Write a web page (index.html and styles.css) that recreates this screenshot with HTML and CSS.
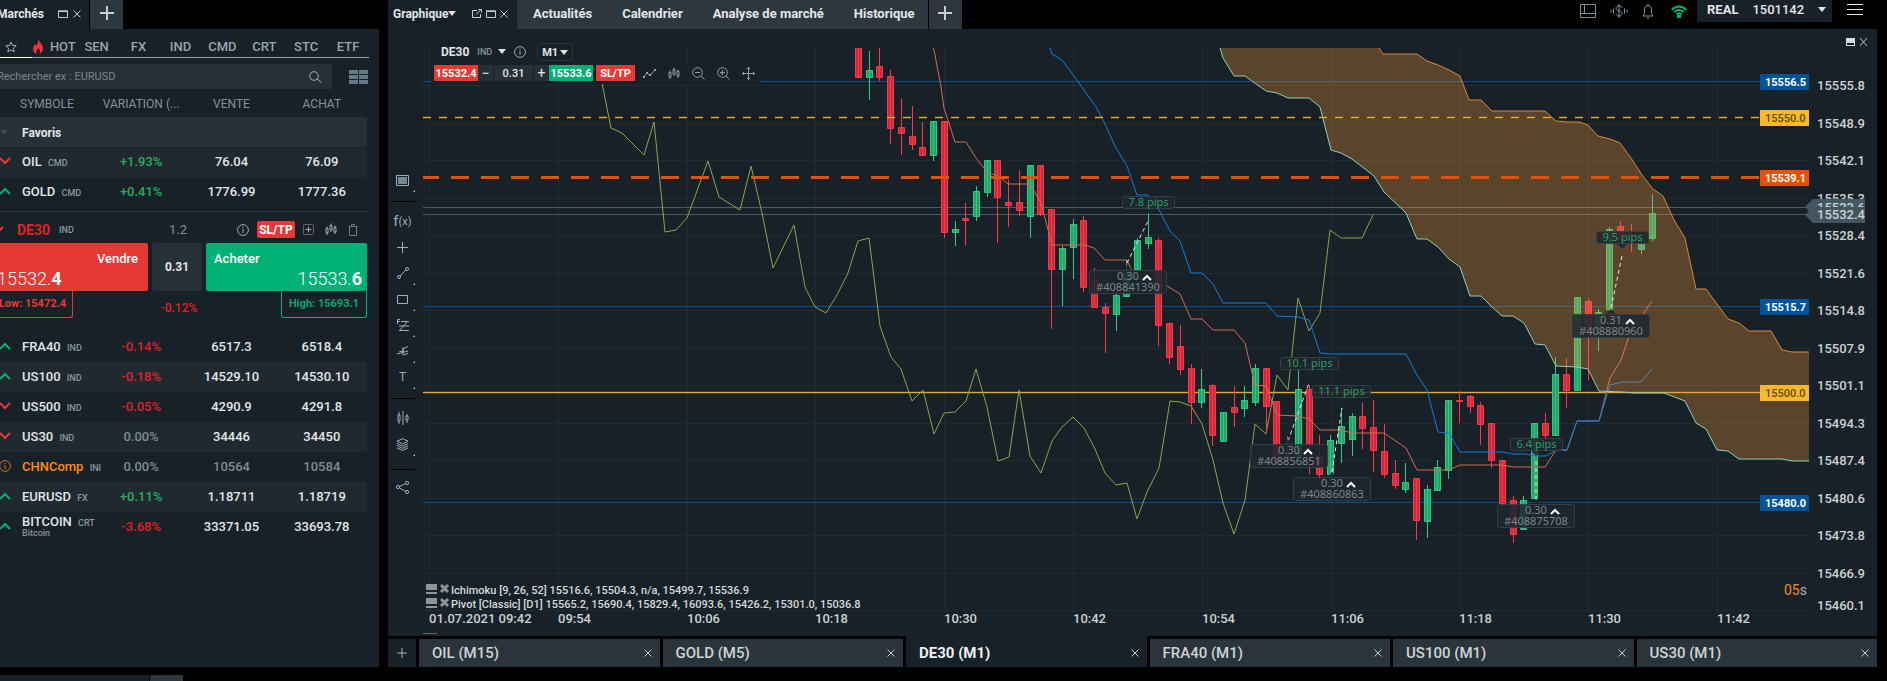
FILE: index.html
```
<!DOCTYPE html>
<html lang="fr">
<head>
    <meta charset="UTF-8">
    <meta name="viewport" content="width=device-width, initial-scale=1.0">
    <title>DE30 (M1)</title>
    <link rel="stylesheet" href="styles.css">
</head>
<body>
    <svg class="defs" width="0" height="0">
        <symbol id="i-close" viewBox="0 0 8 8"><path d="M.5.5l7 7M7.5.5l-7 7"/></symbol>
        <symbol id="i-window" viewBox="0 0 10 8"><path d="M.5 1.5h9v6h-9zM0 .8h10"/></symbol>
        <symbol id="i-plus" viewBox="0 0 14 14"><path d="M7 0v14M0 7h14"/></symbol>
        <symbol id="i-info" viewBox="0 0 12 12"><circle cx="6" cy="6" r="5.4"/><path d="M6 5v4M6 2.8v1.3"/></symbol>
        <symbol id="i-up" viewBox="0 0 12 8"><path d="M1 7l5-5 5 5"/></symbol>
        <symbol id="i-down" viewBox="0 0 12 8"><path d="M1 1l5 5 5-5"/></symbol>
        <symbol id="i-candles" viewBox="0 0 12 13"><path d="M2 3.500v2M2 10v2M1 5.500h2v4.500H1zM6 .500v2M6 7v2M5 2.500h2V7H5zM10 2.500v2M10 9v2M9 4.500h2V9H9z"/></symbol>
    </svg>

    <div class="workspace">
        <aside class="market">
            <div class="tabs">
                <div class="tab active market-tab">
                    Marchés
                    <svg class="icon" width="10" height="8"><use href="#i-window"/></svg>
                    <svg class="icon" width="8" height="8"><use href="#i-close"/></svg>
                </div>
                <button class="tab-add" aria-label="Ajouter"><svg class="icon bold" width="14" height="14"><use href="#i-plus"/></svg></button>
            </div>

            <div class="market-panel">
                <nav class="categories">
                    <a href="#" class="fav" aria-label="Favoris"><svg class="icon" width="12" height="12" viewBox="0 0 12 12"><path d="M6 1l1.500 3.400 3.700.300-2.800 2.500.8 3.600L6 9l-3.200 1.800.8-3.600L.8 4.700l3.700-.3z"/></svg></a>
                    <a href="#"><svg class="flame" width="12" height="15" viewBox="0 0 12 15"><path d="M6 0c1 3 5 5 5 9.500C11 12 9.500 14 7.500 15 8.500 13 8 10.500 6.200 9 6 10.500 4.500 11 4.300 12.500c-.1.900.1 1.700.5 2.500C2.500 14.200 1 12.500 1 10c0-2.500 1.300-3.500 2-5 .5.600.8 1.200.9 2C5.500 5.200 6.500 3 6 0z"/></svg>HOT</a>
                    <a href="#">SEN</a>
                    <a href="#">FX</a>
                    <a href="#">IND</a>
                    <a href="#">CMD</a>
                    <a href="#">CRT</a>
                    <a href="#">STC</a>
                    <a href="#">ETF</a>
                </nav>

                <div class="search-row">
                    <label class="search">
                        <input type="text" placeholder="Rechercher ex : EURUSD" aria-label="Rechercher">
                        <svg class="icon" width="13" height="12" viewBox="0 0 13 12"><circle cx="5" cy="5" r="4.300"/><path d="M8 8l4.500 3.500"/></svg>
                    </label>
                    <button class="plain" aria-label="Affichage"><svg width="19" height="14" viewBox="0 0 19 14" fill="#647b88"><path d="M0 0h9v4H0zM10 0h9v4h-9zM0 5h9v4H0zM10 5h9v4h-9zM0 10h9v4H0zM10 10h9v4h-9z"/></svg></button>
                </div>

                <table class="quotes">
                    <colgroup><col class="c-dir"><col class="c-name"><col><col><col></colgroup>
                    <thead>
                        <tr><th></th><th class="name">SYMBOLE</th><th>VARIATION (...</th><th>VENTE</th><th>ACHAT</th></tr>
                    </thead>
                    <tbody>
                        <tr class="group"><td class="dir"><svg width="8" height="5"><path d="M0 0h8l-4 5z" fill="#3c4a52"/></svg></td><td class="name" colspan="4">Favoris</td></tr>
                        <tr class="alt"><td class="dir red"><svg class="icon" width="12" height="8"><use href="#i-down"/></svg></td><td class="name">OIL <small>CMD</small></td><td class="up">+1.93%</td><td>76.04</td><td>76.09</td></tr>
                        <tr><td class="dir green"><svg class="icon" width="12" height="8"><use href="#i-up"/></svg></td><td class="name">GOLD <small>CMD</small></td><td class="up">+0.41%</td><td>1776.99</td><td>1777.36</td></tr>
                        <tr class="detail">
                            <td colspan="5">
                                <div class="detail-head">
                                    <svg class="icon red" width="12" height="8"><use href="#i-down"/></svg>
                                    <b>DE30</b> <small>IND</small>
                                    <span class="spread">1.2</span>
                                    <svg class="icon" width="12" height="12"><use href="#i-info"/></svg>
                                    <button class="sltp">SL/TP</button>
                                    <svg class="icon" width="11" height="11" viewBox="0 0 11 11"><rect x=".5" y=".5" width="10" height="10" rx="1" opacity=".5"/><path d="M5.500 2.500v6M2.500 5.500h6"/></svg>
                                    <svg class="icon" width="12" height="13"><use href="#i-candles"/></svg>
                                    <svg class="icon dim" width="10" height="12" viewBox="0 0 10 12"><path d="M.5 2.500h9M3.500 2V.5h3V2M1.500 3v8.500h7V3"/></svg>
                                </div>
                                <div class="deal">
                                    <button class="sell"><span>Vendre</span><span class="price">15532.<b>4</b></span></button>
                                    <input class="volume" type="text" value="0.31" aria-label="Volume">
                                    <button class="buy"><span>Acheter</span><span class="price">15533.<b>6</b></span></button>
                                </div>
                                <div class="range">
                                    <span class="low">Low: 15472.4</span>
                                    <span class="down">-0.12%</span>
                                    <span class="high">High: 15693.1</span>
                                </div>
                            </td>
                        </tr>
                        <tr><td class="dir green"><svg class="icon" width="12" height="8"><use href="#i-up"/></svg></td><td class="name">FRA40 <small>IND</small></td><td class="down">-0.14%</td><td>6517.3</td><td>6518.4</td></tr>
                        <tr class="alt"><td class="dir green"><svg class="icon" width="12" height="8"><use href="#i-up"/></svg></td><td class="name">US100 <small>IND</small></td><td class="down">-0.18%</td><td>14529.10</td><td>14530.10</td></tr>
                        <tr><td class="dir red"><svg class="icon" width="12" height="8"><use href="#i-down"/></svg></td><td class="name">US500 <small>IND</small></td><td class="down">-0.05%</td><td>4290.9</td><td>4291.8</td></tr>
                        <tr class="alt"><td class="dir red"><svg class="icon" width="12" height="8"><use href="#i-down"/></svg></td><td class="name">US30 <small>IND</small></td><td class="flat">0.00%</td><td>34446</td><td>34450</td></tr>
                        <tr class="closed"><td class="dir orange"><svg class="icon info" width="12" height="12"><use href="#i-info"/></svg></td><td class="name">CHNComp <small>INI</small></td><td class="flat">0.00%</td><td>10564</td><td>10584</td></tr>
                        <tr class="alt"><td class="dir green"><svg class="icon" width="12" height="8"><use href="#i-up"/></svg></td><td class="name">EURUSD <small>FX</small></td><td class="up">+0.11%</td><td>1.18711</td><td>1.18719</td></tr>
                        <tr><td class="dir green"><svg class="icon" width="12" height="8"><use href="#i-up"/></svg></td><td class="name">BITCOIN <small>CRT</small><em>Bitcoin</em></td><td class="down">-3.68%</td><td>33371.05</td><td>33693.78</td></tr>
                    </tbody>
                </table>
            </div>
        </aside>

        <main class="main">
            <header class="tabs">
                <div class="tab active chart-tab">
                    <span class="title">Graphique<i class="caret"></i></span>
                    <svg class="icon" width="10" height="9" viewBox="0 0 10 9"><path d="M5 1.500H.5v7h8V5M4 5.500L9 .5M6.500.5h3v3"/></svg>
                    <svg class="icon" width="10" height="8"><use href="#i-window"/></svg>
                    <svg class="icon" width="8" height="8"><use href="#i-close"/></svg>
                </div>
                <nav class="links">
                    <a href="#">Actualités</a>
                    <a href="#">Calendrier</a>
                    <a href="#">Analyse de marché</a>
                    <a href="#">Historique</a>
                </nav>
                <button class="tab-add" aria-label="Ajouter"><svg class="icon bold" width="14" height="14"><use href="#i-plus"/></svg></button>

                <div class="account">
                    <svg class="icon" width="16" height="14" viewBox="0 0 16 14"><path d="M.5.5h15v13H.5zM4.500.5v9M.5 9.500h15"/></svg>
                    <svg class="icon" width="18" height="14" viewBox="0 0 18 14"><path d="M9 0v14M12 4c0-1.300-1.300-2-3-2s-3 .8-3 2.200C6 7.700 12 6.300 12 9.500c0 1.500-1.300 2.500-3 2.500s-3-.8-3-2.300M3.500 4.500v5M1 5.500v3M14.500 4.500v5M17 5.500v3"/></svg>
                    <svg class="icon" width="12" height="15" viewBox="0 0 12 15"><path d="M1 12c1.500-1.200 1.500-3 1.500-6C2.500 3.200 4 1.500 6 1.500S9.500 3.200 9.500 6c0 3 0 4.800 1.500 6zM4.500 14h3M6 0v1.500"/></svg>
                    <svg class="wifi" width="16" height="13" viewBox="0 0 16 13"><path d="M.8 4.800c4-4.500 10.400-4.500 14.400 0M3.200 7.200c2.700-3 6.900-3 9.600 0M5.500 9.500c1.500-1.600 3.500-1.600 5 0"/><path d="M7 11h2v1H7z"/></svg>
                    <button class="user"><b>REAL</b><span>1501142</span><i class="caret"></i></button>
                    <button class="plain" aria-label="Menu"><svg class="menu" width="16" height="11" viewBox="0 0 16 11"><path d="M0 .5h16M0 5.500h16M0 10.500h16"/></svg></button>
                </div>
            </header>

            <section class="chart-panel">
                <div class="tools">
                    <button class="more" aria-label="Mise en page"><svg class="icon" width="13" height="11" viewBox="0 0 13 11"><path d="M.5.5h12v10H.5z"/><path d="M2 2h9v7H2z" fill="#718893" stroke="none"/></svg></button>
                    <hr>
                    <button class="fx">f<small>(x)</small></button>
                    <button aria-label="Croix"><svg class="icon" width="11" height="11" viewBox="0 0 11 11"><path d="M5.500 0v11M0 5.500h11"/></svg></button>
                    <button class="more" aria-label="Ligne"><svg class="icon" width="12" height="12" viewBox="0 0 12 12"><circle cx="2" cy="10" r="1.500"/><circle cx="10" cy="2" r="1.500"/><path d="M3 9l6-6"/></svg></button>
                    <button class="more" aria-label="Rectangle"><svg class="icon" width="11" height="9" viewBox="0 0 11 9"><path d="M.5.5h10v8H.5z"/></svg></button>
                    <button class="more" aria-label="Fibonacci"><svg class="icon" width="12" height="12" viewBox="0 0 12 12"><path d="M.5 5V.5H3M.5 2.500H3M4 2.500h8M2 7h10M2 11.500h10M3 11l7-8"/></svg></button>
                    <button class="more" aria-label="Fourchette"><svg class="icon" width="12" height="10" viewBox="0 0 12 10"><path d="M0 8l11-3M6 1v8M6 3l5-2.500M6 9l5-1.500M2 6l4-1M6 6V3"/></svg></button>
                    <button class="more text">T</button>
                    <hr>
                    <button aria-label="Bougies"><svg class="icon" width="12" height="14" viewBox="0 0 12 14"><path d="M6 0v14M2 1v3M2 10v3M1 4h2v6H1zM10 3v2M10 9v3M9 5h2v4H9z"/></svg></button>
                    <button class="more" aria-label="Calques"><svg class="icon" width="13" height="13" viewBox="0 0 13 13"><path d="M6.500.7l5.500 2.500-5.500 2.600L1 3.200zM1 5.500l5.500 2.600L12 5.500M1 7.700l5.500 2.600L12 7.700M1 9.800l5.500 2.600L12 9.800"/></svg></button>
                    <hr class="wide">
                    <button aria-label="Partager"><svg class="icon" width="13" height="13" viewBox="0 0 13 13"><circle cx="2" cy="6" r="1.600"/><circle cx="11" cy="2" r="1.600"/><circle cx="11" cy="11" r="1.600"/><path d="M3.500 5.500L9.500 2.600M3.500 7l6 3.300"/></svg></button>
                </div>

                <svg class="chart" id="chart" viewBox="418 29 1459 607">
                    <clipPath id="plot"><path d="M423 48h1386v564H423z"/></clipPath>
                    <g id="grid" class="grid"></g>
                    <g class="levels">
                        <path class="blue" d="M423 81.500H1760M423 306.500H1760M423 502.500H1760"/>
                        <path class="yellow glow" d="M423 392.500H1760"/>
                        <path class="yellow" d="M423 392.500H1760"/>
                        <path class="quote" d="M423 207.500H1806M423 214.500H1806"/>
                    </g>
                    <g clip-path="url(#plot)">
                        <polyline class="chikou" points="602,83 611,128 622,133 644,155 654,122 665,232 676,230 687,218 708,161 719,197 740,210 751,166 762,213 773,268 794,225 805,287 815,307 826,313 837,295 848,273 858,241 869,238 880,326 891,357 901,369 912,401 923,390 934,434 944,413 955,412 966,401 976,369 987,407 998,461 1009,457 1019,390 1030,456 1041,473 1052,441 1062,427 1073,417 1084,428 1095,449 1105,473 1116,485 1127,483 1137,519 1147,492 1159,468 1170,401 1180,402 1191,406 1202,424 1213,460 1223,503 1234,534 1245,500 1255,424 1266,434 1277,375 1288,390 1298,298 1309,331 1320,313 1330,230 1341,238 1362,238 1373,215"/>
                        <g id="candles"></g>
                        <polyline class="tenkan" points="933,48 934,50 941,87 944,108 955,142 966,142 976,158 987,172 1000,177 1008,184 1030,184 1041,203 1052,245 1085,245 1094,248 1105,260 1127,260 1135,278 1167,286 1180,294 1191,319 1202,319 1213,330 1234,330 1245,343 1255,385 1266,386 1277,415 1298,416 1309,419 1320,430 1341,430 1352,433 1384,433 1406,448 1417,470 1449,470 1460,465 1502,465 1513,467 1545,467 1556,450 1567,450 1577,421 1599,421 1610,378 1621,360 1630,333 1652,301"/>
                        <polyline class="kijun" points="1050,48 1052,54 1062,60 1074,76 1096,107 1104,122 1116,148 1127,166 1137,195 1148,195 1158,208 1170,231 1180,241 1191,273 1202,273 1213,284 1223,303 1266,303 1277,316 1298,317 1309,320 1320,353 1330,354 1406,354 1417,375 1427,390 1438,432 1449,433 1460,452 1502,452 1513,454 1525,454 1536,456 1546,456 1556,450 1567,450 1577,421 1599,421 1610,385 1622,382 1641,382 1652,369"/>
                        <path class="cloud" d="M1220 48L1223 58 1234 76 1245 76 1266 91 1277 93 1288 98 1309 98 1320 107 1331 150 1341 153 1352 159 1374 176 1384 192 1406 213 1417 239 1427 239 1438 247 1449 259 1460 267 1470 296 1481 296 1491 306 1502 316 1513 316 1524 323 1535 344 1545 345 1556 366 1577 367 1588 369 1599 391 1622 392 1633 393 1664 393 1685 401 1696 423 1706 429 1717 450 1728 451 1739 459 1782 459 1792 461 1809 461V352L1792 352 1782 350 1771 331 1749 331 1739 323 1728 319 1706 289 1696 289 1685 238 1674 220 1663 196 1653 189 1642 175 1631 158 1620 143 1610 139 1598 136 1588 125 1579 122 1567 122 1556 121 1545 111 1492 111 1481 100 1469 100 1460 76 1449 70 1438 65 1427 61 1417 54 1383 54 1379 48z"/>
                        <polyline class="span-a" points="1220,48 1223,58 1234,76 1245,76 1266,91 1277,93 1288,98 1309,98 1320,107 1331,150 1341,153 1352,159 1374,176 1384,192 1406,213 1417,239 1427,239 1438,247 1449,259 1460,267 1470,296 1481,296 1491,306 1502,316 1513,316 1524,323 1535,344 1545,345 1556,366 1577,367 1588,369 1599,391 1622,392 1633,393 1664,393 1685,401 1696,423 1706,429 1717,450 1728,451 1739,459 1782,459 1792,461 1809,461"/>
                        <polyline class="span-b" points="1379,48 1383,54 1417,54 1427,61 1438,65 1449,70 1460,76 1469,100 1481,100 1492,111 1545,111 1556,121 1567,122 1579,122 1588,125 1598,136 1610,139 1620,143 1631,158 1642,175 1653,189 1663,196 1674,220 1685,238 1696,289 1706,289 1728,319 1739,323 1749,331 1771,331 1782,350 1792,352 1809,352"/>
                    </g>
                    <g class="levels">
                        <path class="yellow dashed glow" d="M423 117.500H1760"/>
                        <path class="yellow dashed" d="M423 117.500H1760"/>
                        <path class="orange dashed" d="M423 177.500H1760"/>
                    </g>
                    <g id="trades" class="trades"></g>
                    <g id="axis" class="axis"></g>
                    <g class="tags">
                        <path fill="#3f5a66" d="M1805 207l8-8h52v16h-52z"/>
                        <text class="current" x="1817" y="212">15533.6</text>
                        <path fill="#44555f" d="M1805 215l8-8h52v16h-52z"/>
                        <text class="current" x="1817" y="219">15532.4</text>
                        <path fill="#00529b" d="M1760 74h49v16h-49zM1760 299h49v16h-49zM1760 495h49v16h-49z"/>
                        <path fill="#f8b92a" d="M1760 110h49v16h-49zM1760 385h49v16h-49z"/>
                        <path fill="#e65100" d="M1760 170h49v16h-49z"/>
                        <text x="1765" y="86">15556.5</text>
                        <text class="dark" x="1765" y="122">15550.0</text>
                        <text x="1765" y="182">15539.1</text>
                        <text x="1765" y="311">15515.7</text>
                        <text class="dark" x="1765" y="397">15500.0</text>
                        <text x="1765" y="507">15480.0</text>
                    </g>
                    <g class="legend">
                        <path d="M426 584h11v6h-11zM426 592h11v2h-11zM426 598h11v6h-11zM426 606h11v2h-11z"/>
                        <path class="cross" d="M441 585l7 7M448 585l-7 7M441 599l7 7M448 599l-7 7"/>
                        <text x="451" y="594">Ichimoku [9, 26, 52] 15516.6, 15504.3, n/a, 15499.7, 15536.9</text>
                        <text x="451" y="608">Pivot [Classic] [D1] 15565.2, 15690.4, 15829.4, 16093.6, 15426.2, 15301.0, 15036.8</text>
                    </g>
                    <text class="timer" x="1784" y="595">05<tspan>s</tspan></text>
                    <path class="handle" d="M423 633.500h14"/>
                    <path class="controls" d="M1846 38h9v8h-9zM1847 43v2h7v-2z"/>
                    <path class="controls-x" d="M1860 38l7 8M1867 38l-7 8"/>
                </svg>

                <div class="chart-bar">
                    <div class="bar-row">
                        <b>DE30</b> <small>IND</small>
                        <i class="caret"></i>
                        <svg class="icon" width="12" height="12"><use href="#i-info"/></svg>
                        <label class="period"><select aria-label="Période"><option>M1</option><option>M5</option><option>M15</option></select><i class="caret"></i></label>
                    </div>
                    <div class="bar-row second">
                        <button class="quick sell">15532.4</button>
                        <button class="step">−</button>
                        <input type="text" value="0.31" aria-label="Volume">
                        <button class="step">+</button>
                        <button class="quick buy">15533.6</button>
                        <button class="quick sell sl">SL/TP</button>
                        <div class="bar-icons">
                            <svg class="icon" width="13" height="9" viewBox="0 0 13 9"><path d="M1 7.500l3-3.500 3 2.500 5-5.500"/><path d="M0 7h2v2H0zM3 3h2v2H3zM6 5h2v2H6zM11 0h2v2h-2z" fill="#8fa3ad" stroke="none"/></svg>
                            <svg class="icon" width="12" height="13"><use href="#i-candles"/></svg>
                            <svg class="icon" width="13" height="13" viewBox="0 0 13 13"><circle cx="5.500" cy="5.500" r="4.800"/><path d="M3 5.500h5M9 9l3.500 3.500"/></svg>
                            <svg class="icon" width="13" height="13" viewBox="0 0 13 13"><circle cx="5.500" cy="5.500" r="4.800"/><path d="M3 5.500h5M5.500 3v5M9 9l3.500 3.500"/></svg>
                            <svg class="icon" width="13" height="13" viewBox="0 0 13 13"><path d="M6.500.5v12M.5 6.500h12M5 2L6.500.5 8 2M5 11l1.500 1.500L8 11M2 5L.5 6.500 2 8M11 5l1.500 1.500L11 8"/></svg>
                        </div>
                    </div>
                </div>
            </section>

            <div class="chart-tabs">
                <button class="new" aria-label="Nouveau graphique"><svg class="icon" width="10" height="10"><use href="#i-plus"/></svg></button>
                <button>OIL (M15)<svg class="icon" width="8" height="8"><use href="#i-close"/></svg></button>
                <button>GOLD (M5)<svg class="icon" width="8" height="8"><use href="#i-close"/></svg></button>
                <button class="current">DE30 (M1)<svg class="icon" width="8" height="8"><use href="#i-close"/></svg></button>
                <button>FRA40 (M1)<svg class="icon" width="8" height="8"><use href="#i-close"/></svg></button>
                <button>US100 (M1)<svg class="icon" width="8" height="8"><use href="#i-close"/></svg></button>
                <button>US30 (M1)<svg class="icon" width="8" height="8"><use href="#i-close"/></svg></button>
            </div>
        </main>
    </div>

    <div class="bottom-tabs">
        <div class="tab active"></div>
        <div class="tab-add"></div>
    </div>

    <script src="chart.js"></script>
</body>
</html>
```
FILE: styles.css
```
* {
    box-sizing: border-box;
}

html,
body {
    height: 100%;
    overflow: hidden;
}

body {
    margin: 0;
    background: #000;
    color: #e3e6e8;
    font-family: Roboto, "Liberation Sans", sans-serif;
    font-size: 13px;
    font-weight: 500;
}

button,
input,
select {
    font: inherit;
    color: inherit;
    border: 0;
    padding: 0;
    margin: 0;
    background: none;
}

a {
    color: inherit;
    text-decoration: none;
}

b {
    font-weight: 700;
}

small {
    font-size: 9px;
    color: #8a999f;
}

.defs {
    position: absolute;
}

.icon {
    flex: none;
    fill: none;
    stroke: #9fb0b8;
    stroke-width: 1;
}

.icon.bold {
    stroke: #c8cdd0;
    stroke-width: 2;
}

.icon.dim {
    stroke: #6d7b83;
}

.caret {
    display: inline-block;
    border: 4px solid transparent;
    border-top: 5px solid #dfe3e5;
    border-bottom: 0;
}

.plain {
    display: flex;
}

.workspace {
    display: flex;
    gap: 9px;
    padding-right: 10px;
}

/* tabs on top of both panels */
.tabs {
    display: flex;
    height: 29px;
}

.tab {
    display: flex;
    align-items: center;
    background: #172127;
}

.tab .icon {
    stroke: #c8cdd0;
}

.tab-add {
    display: flex;
    align-items: center;
    justify-content: center;
    width: 33px;
    margin-left: 1px;
    padding-bottom: 3px;
    background: #2c373e;
}

/* market watch */
.market {
    display: flex;
    flex-direction: column;
    flex: none;
    width: 387px;
    margin-left: -8px;
}

.market-tab {
    width: 97px;
    padding: 0 8px 2px 5px;
    gap: 5px;
    font-size: 12px;
    font-weight: 700;
}

.market-tab .icon:first-of-type {
    margin-left: auto;
}

.market-panel {
    flex: 1;
    padding: 0 12px 0 8px;
    background: #172127;
}

.categories {
    display: grid;
    grid-template-columns: repeat(9, 1fr);
    height: 29px;
    margin: 0 -2px 0 -10px;
    color: #99a6ad;
}

.categories a {
    display: flex;
    align-items: center;
    justify-content: center;
    padding-top: 7px;
    border-bottom: 1px solid #9aa3a8;
    white-space: nowrap;
}

.categories .fav {
    border-color: #fff;
}

.flame {
    flex: none;
    margin-right: 6px;
    fill: #f0343c;
}

.search-row {
    display: flex;
    align-items: center;
    justify-content: space-between;
    padding-top: 6px;
    margin-right: -1px;
}

.search {
    display: flex;
    align-items: center;
    width: 340px;
    height: 25px;
    margin-left: -8px;
    margin-right: 17px;
    padding: 0 10px 0 5px;
    background: #283037;
}

.search input {
    flex: 1;
    min-width: 0;
    font-size: 11px;
    font-weight: 400;
    outline: none;
}

.search input::placeholder {
    color: #7b8287;
}

.quotes {
    width: 100%;
    table-layout: fixed;
    border-collapse: collapse;
    text-align: center;
}

.c-dir {
    width: 22px;
}

.c-name {
    width: 74px;
}

.quotes th {
    height: 28px;
    padding: 2px 0 0;
    font-size: 12px;
    font-weight: 400;
    color: #859199;
    white-space: nowrap;
}

.quotes td {
    height: 30px;
    padding: 0 0 2px;
}

.quotes .name {
    text-align: left;
    white-space: nowrap;
}

.quotes th.name {
    text-indent: -2px;
}

.quotes .name small {
    margin-left: 3px;
}

.quotes .name em {
    display: block;
    margin-top: -1px;
    font-size: 9px;
    line-height: 10px;
    font-style: normal;
    color: #85929a;
}

.quotes .dir {
    text-align: left;
    line-height: 0;
}

.dir .icon {
    margin-left: -1px;
}

.dir .icon.info {
    stroke: #c47a14;
}

.red .icon,
.icon.red {
    stroke: #e53935;
    stroke-width: 2;
}

.green .icon {
    stroke: #00b176;
    stroke-width: 2;
}

.group {
    background: #283037;
    border-bottom: 1px solid #172127;
}

.quotes .group td {
    padding: 2px 0 0;
}

.group .name {
    font-size: 12px;
    font-weight: 700;
}

.alt {
    background: #20292f;
}

.up {
    color: #27ae60;
}

.down {
    color: #e02028;
}

.flat,
.closed td {
    color: #7f8c94;
}

.closed td.name {
    color: #ff8c00;
}

.quotes .detail td {
    height: auto;
    padding: 4px 0 14px;
}

.detail-head {
    display: flex;
    align-items: center;
    gap: 11px;
    height: 32px;
    padding: 4px 9px 0 0;
    border-top: 1px solid #2d383f;
}

.detail-head .red {
    margin-left: -8px;
}

.detail-head b {
    margin-left: 2px;
    font-size: 14px;
    color: #e02028;
}

.detail-head small {
    margin-left: -2px;
}

.detail-head .spread {
    margin: 0 39px 0 auto;
    color: #808d95;
    font-weight: 400;
}

.sltp {
    width: 38px;
    height: 17px;
    margin: 0 -3px;
    border-radius: 2px;
    background: #e53935;
    color: #fff;
    font-size: 12px;
    font-weight: 700;
}

.deal {
    display: flex;
    gap: 4px;
    height: 48px;
    margin-left: -8px;
}

.deal button {
    display: flex;
    flex-direction: column;
    justify-content: space-between;
    align-items: flex-start;
    padding: 8px 5px 2px;
    border-radius: 2px;
    color: #fff;
}

.deal .sell {
    width: 156px;
}

.deal .buy {
    flex: 1;
}

.sell {
    background: #e53935;
}

.buy {
    background: #00b176;
}

.deal .sell span:first-child {
    align-self: flex-end;
    margin-right: 5px;
}

.deal .buy span:first-child {
    margin-left: 3px;
}

.deal .price {
    font-size: 18px;
    line-height: 21px;
    font-weight: 300;
}

.deal .buy .price {
    align-self: flex-end;
}

.volume {
    width: 50px;
    border-radius: 3px;
    background: #283037;
    text-align: center;
    font-size: 12px;
    font-weight: 700;
}

.range {
    display: grid;
    grid-template-columns: 81px 1fr 86px;
    align-items: start;
    height: 27px;
    margin-left: -8px;
    font-size: 11px;
    line-height: 26px;
}

.range .down {
    padding: 4px 0 0 4px;
    font-size: 12px;
}

.low,
.high {
    border: 1px solid #e53935;
    border-top: 0;
    border-radius: 0 0 3px 3px;
    color: #e53935;
    font-weight: 700;
}

.high {
    border-color: #00b176;
    color: #0aa56c;
}

/* main side */
.main {
    flex: 1;
    min-width: 0;
}

.chart-tab {
    width: 129px;
    gap: 4px;
    padding: 0 9px 2px 5px;
}

.chart-tab .title {
    display: flex;
    align-items: center;
    margin-right: auto;
    font-size: 12px;
    font-weight: 700;
}

.links {
    display: flex;
    align-items: center;
    gap: 30px;
    padding: 0 13px 2px 16px;
    background: #2c373e;
    font-size: 13px;
    font-weight: 700;
}

.account {
    display: flex;
    align-items: center;
    gap: 14px;
    height: 22px;
    margin-left: auto;
    padding-right: 6px;
}

.account .icon {
    stroke: #80939d;
}

.wifi {
    margin-left: 3px;
    fill: none;
    stroke: #00b176;
    stroke-width: 2;
}

.menu {
    margin: 0 8px 3px 9px;
    stroke: #e3e6e8;
}

.user {
    display: flex;
    align-items: center;
    gap: 14px;
    width: 135px;
    height: 22px;
    padding: 0 7px 3px 10px;
    margin-left: -4px;
    margin-right: -1px;
    background: #172127;
}

.user + .plain {
    margin-left: -7px;
}

.user .caret {
    margin-left: auto;
}

.chart-panel {
    position: relative;
    display: flex;
    background: #172127;
}

.tools {
    display: flex;
    flex-direction: column;
    flex: none;
    width: 30px;
    padding-top: 138px;
}

.tools hr {
    width: 24px;
    height: 1px;
    margin: 8px 3px 6px;
    border: 0;
    background: #000;
}

.tools .wide {
    margin: 12px 3px 4px;
}

.tools button {
    position: relative;
    display: flex;
    align-items: center;
    justify-content: center;
    width: 29px;
    height: 26px;
    color: #9fb0b8;
}

.tools .fx {
    font-size: 15px;
    font-weight: 400;
}

.tools .fx small {
    font-size: 11px;
    color: inherit;
}

.tools .text {
    font-size: 12px;
    font-weight: 400;
}

.tools .more::after {
    content: "";
    position: absolute;
    right: 2px;
    bottom: 1px;
    border: 1px solid #b9c3c8;
    border-top-color: transparent;
    border-left-color: transparent;
}

/* chart */
.chart {
    flex: 1;
    min-width: 0;
    height: auto;
    fill: none;
}

.chart polyline {
    stroke-width: 1;
}

.grid {
    stroke: #202b31;
}

.levels .blue {
    stroke: #00529b;
}

.levels .yellow {
    stroke: #e8ab2a;
}

.levels .orange {
    stroke: #e65100;
    stroke-width: 3;
    stroke-dasharray: 18 12;
    stroke-dashoffset: 2;
}

.levels .yellow.dashed {
    stroke-dasharray: 8 8;
}

.levels .yellow.glow {
    stroke-width: 3;
    stroke-opacity: 0.2;
}

.levels .quote {
    stroke: #4b5c67;
}

.chikou {
    stroke: #86a84f;
}

.tenkan {
    stroke: #d06c55;
}

.kijun {
    stroke: #0e7fe0;
}

.cloud {
    fill: #f29939;
    fill-opacity: 0.31;
}

.span-a {
    stroke: #8fd0ba;
}

.span-b {
    stroke: #d98a36;
}

.candle-up {
    fill: #26a269;
    stroke: #2dcc86;
}

.candle-down {
    fill: #cb2d3e;
    stroke: #ff3548;
}

.axis text,
.tags .current {
    font-size: 13px;
    font-weight: 500;
    fill: #ccd1d4;
}

.tags text {
    font-size: 11px;
    font-weight: 700;
    fill: #fff;
}

.tags text.dark {
    font-weight: 500;
    fill: #5f4a14;
}

.tags text.current {
    font-size: 13px;
    font-weight: 500;
}

.trades rect,
.trades .tip {
    fill: #20272f;
    fill-opacity: 0.88;
    stroke: #343e48;
}

.trades .tip {
    stroke: none;
}

.trades text {
    font-family: "Noto Sans", sans-serif;
    font-size: 11px;
    font-weight: 400;
    text-anchor: middle;
    fill: #7d858c;
}

.trades .pips {
    fill: #2a9d68;
}

.trades .route {
    stroke: #e8ecee;
    stroke-dasharray: 4 3;
}

.trades .chevron {
    stroke: #fff;
    stroke-width: 2;
}

.legend path {
    fill: #8f9497;
}

.legend .cross {
    stroke: #8f9497;
    stroke-width: 3;
}

.legend text {
    font-size: 11px;
    font-weight: 500;
    fill: #d6dadc;
}

.timer {
    font-size: 14px;
    font-weight: 400;
    fill: #f28c1c;
}

.timer tspan {
    fill: #aab3b8;
}

.handle {
    stroke: #5d6a72;
}

.controls {
    fill: #d5dadd;
    fill-rule: evenodd;
}

.controls-x {
    stroke: #b9c1c6;
}

/* order bar over the chart */
.chart-bar {
    position: absolute;
    left: 43px;
    top: 13px;
}

.bar-row {
    display: flex;
    align-items: center;
    width: max-content;
    height: 20px;
    padding-left: 10px;
    background: #172127;
    font-size: 12px;
}

.bar-row small {
    margin-left: 8px;
}

.bar-row > .caret {
    margin: 0 8px 2px 6px;
}

.period {
    display: flex;
    align-items: center;
    width: 36px;
    height: 18px;
    margin-left: 11px;
    padding: 0 4px;
    border: 1px solid #2a343b;
    border-radius: 3px;
}

.period select {
    flex: 1;
    min-width: 0;
    appearance: none;
    font-size: 11px;
    font-weight: 700;
    outline: none;
}

.bar-row.second {
    height: 22px;
    padding-left: 3px;
}

.quick {
    width: 44px;
    height: 16px;
    color: #fff;
    font-size: 11px;
    font-weight: 700;
}

.quick.sl {
    width: 39px;
    margin-left: 3px;
}

.step {
    width: 15px;
    height: 16px;
    background: #283037;
    font-size: 14px;
    font-weight: 400;
    line-height: 16px;
}

.second input {
    width: 39px;
    height: 16px;
    margin: 0 1px;
    background: #283037;
    text-align: center;
    font-size: 11px;
}

.bar-icons {
    display: flex;
    align-items: center;
    gap: 12px;
    padding: 0 4px 0 8px;
}

.bar-icons .icon {
    stroke: #8fa3ad;
}

/* open charts */
.chart-tabs {
    display: flex;
    gap: 3px;
    padding-top: 3px;
}

.chart-tabs button {
    flex: 1;
    display: flex;
    align-items: center;
    justify-content: space-between;
    height: 28px;
    padding: 0 8px 1px 13px;
    background: #2a343a;
    color: #d0d4d6;
    font-size: 15px;
}

.chart-tabs .icon {
    stroke: #c3c9cc;
}

.chart-tabs .new {
    flex: none;
    width: 28px;
    padding: 0 9px;
    background: #172127;
}

.chart-tabs .new .icon {
    stroke: #e3e6e8;
}

.chart-tabs .current {
    height: 31px;
    margin-top: -3px;
    padding-top: 3px;
    background: #172127;
    color: #eef0f1;
    font-weight: 700;
}

.bottom-tabs {
    display: flex;
    height: 29px;
    margin-top: 8px;
}

.bottom-tabs .active {
    width: 149px;
}
```
FILE: chart.js
```
const NS = 'http://www.w3.org/2000/svg';

function add(parent, tag, attrs, text) {
    const el = document.createElementNS(NS, tag);
    for (const key in attrs) el.setAttribute(key, attrs[key]);
    if (text !== undefined) el.textContent = text;
    document.getElementById(parent).appendChild(el);
}

// grid and axis labels
const times = ['01.07.2021 09:42', '09:54', '10:06', '10:18', '10:30', '10:42', '10:54', '11:06', '11:18', '11:30', '11:42'];
times.forEach((label, i) => {
    const x = Math.round(429 + 128.8 * i);
    add('grid', 'path', { d: `M${x + 0.5} 48V612` });
    add('axis', 'text', { x: x, y: 623 }, label);
});

const prices = ['15555.8', '15548.9', '15542.1', '15535.3', '15528.4', '15521.6', '15514.8', '15507.9', '15501.1', '15494.3', '15487.4', '15480.6', '15473.8', '15466.9', '15460.1'];
prices.forEach((label, i) => {
    const y = Math.round(85 + 37.5 * i);
    add('grid', 'path', { d: `M423 ${y + 0.5}H1811` });
    add('axis', 'text', { x: 1817, y: Math.min(y + 5, 610) }, label);
});

// [up, high, low, top, bottom], one candle per minute from 10:22
const candles = [
    [0, 46, 78, 46, 78], [1, 51, 100, 70, 78], [0, 48, 81, 66, 78], [0, 70, 144, 76, 129],
    [0, 98, 155, 127, 134], [0, 106, 150, 136, 145], [0, 122, 156, 147, 156], [1, 121, 161, 121, 156],
    [0, 121, 238, 121, 233], [1, 221, 246, 229, 233], [0, 203, 246, 218, 221], [1, 186, 221, 191, 217],
    [1, 160, 197, 160, 193], [0, 160, 243, 160, 198], [0, 180, 227, 202, 206], [0, 170, 216, 202, 211],
    [1, 165, 238, 165, 217], [0, 165, 216, 165, 215], [0, 209, 329, 209, 270], [1, 246, 306, 248, 270],
    [1, 219, 279, 224, 248], [0, 216, 292, 220, 288], [0, 268, 308, 280, 308], [0, 303, 353, 307, 314],
    [1, 294, 331, 295, 315], [1, 260, 297, 273, 297], [1, 238, 270, 240, 270], [1, 213, 249, 237, 244],
    [0, 238, 346, 240, 326], [0, 323, 364, 323, 358], [0, 325, 375, 346, 370], [0, 364, 424, 368, 403],
    [1, 369, 408, 389, 403], [0, 384, 446, 385, 436], [1, 412, 442, 412, 442], [0, 386, 427, 407, 413],
    [1, 386, 417, 400, 409], [1, 364, 406, 368, 403], [0, 368, 433, 368, 407], [0, 401, 467, 401, 462],
    [0, 436, 468, 455, 458], [1, 370, 458, 389, 458], [0, 385, 474, 389, 446], [0, 435, 482, 456, 475],
    [1, 435, 475, 440, 475], [1, 408, 463, 426, 444], [1, 413, 456, 416, 440], [0, 402, 449, 416, 429],
    [0, 400, 472, 427, 451], [0, 424, 478, 451, 475], [0, 460, 489, 473, 486], [1, 463, 493, 482, 490],
    [0, 478, 540, 478, 521], [1, 485, 538, 489, 522], [1, 460, 491, 467, 491], [1, 400, 479, 400, 471],
    [0, 391, 423, 400, 402], [0, 395, 413, 396, 407], [0, 402, 445, 405, 425], [0, 423, 468, 423, 461],
    [0, 460, 510, 460, 504], [0, 496, 543, 500, 535], [1, 496, 530, 500, 530], [1, 423, 499, 423, 499],
    [0, 413, 438, 423, 436], [1, 357, 436, 374, 436], [0, 358, 408, 374, 391], [1, 297, 391, 297, 391],
    [0, 298, 380, 301, 328], [1, 309, 351, 312, 330], [1, 227, 310, 229, 310], [0, 221, 240, 226, 240],
    [0, 224, 252, 239, 241], [1, 238, 254, 238, 250], [1, 194, 241, 213, 239]
];
candles.forEach(([up, high, low, top, bottom], i) => {
    const x = Math.round(858 + 10.73 * i) + 0.5;
    add('candles', 'path', {
        class: up ? 'candle-up' : 'candle-down',
        d: `M${x} ${high}V${low}M${x - 3} ${top + 0.5}h6V${bottom - 0.5}h-6z`
    });
});

// closed trades: entry label, route and result
const trades = [
    { id: '#408841390', lot: '0.30', box: [1089, 270], from: [1127, 263], to: [1148, 221], pips: '7.8 pips', at: [1122, 196, 53] },
    { id: '#408856851', lot: '0.30', box: [1250, 444], from: [1288, 441], to: [1309, 383], pips: '10.1 pips', at: [1280, 357, 59] },
    { id: '#408860863', lot: '0.30', box: [1293, 477], from: [1332, 472], to: [1342, 408], pips: '11.1 pips', at: [1312, 385, 59] },
    { id: '#408875708', lot: '0.30', box: [1497, 504], from: [1536, 500], to: [1536, 458], pips: '6.4 pips', at: [1510, 438, 53] },
    { id: '#408880960', lot: '0.31', box: [1572, 314], from: [1611, 308], to: [1622, 256], pips: '9.5 pips', at: [1596, 231, 53] }
];
trades.forEach(({ id, lot, box, from, to, pips, at }) => {
    const [x, y] = box;
    const [px, py, w] = at;
    add('trades', 'path', { class: 'route', d: `M${from}L${to}` });
    add('trades', 'rect', { x: x + 0.5, y: y + 0.5, width: 77, height: 23, rx: 2 });
    add('trades', 'path', { class: 'tip', d: `M${from[0] - 5} ${y}l5 -5 5 5z` });
    add('trades', 'text', { x: x + 39, y: y + 10 }, lot);
    add('trades', 'text', { x: x + 39, y: y + 21 }, id);
    add('trades', 'path', { class: 'chevron', d: `M${x + 54} ${y + 10}l4 -4 4 4` });
    add('trades', 'rect', { x: px + 0.5, y: py + 0.5, width: w - 1, height: 12, rx: 2 });
    add('trades', 'path', { class: 'tip', d: `M${to[0] - 5} ${py + 13}l5 5 5 -5z` });
    add('trades', 'text', { class: 'pips', x: px + w / 2, y: py + 10 }, pips);
});
```
